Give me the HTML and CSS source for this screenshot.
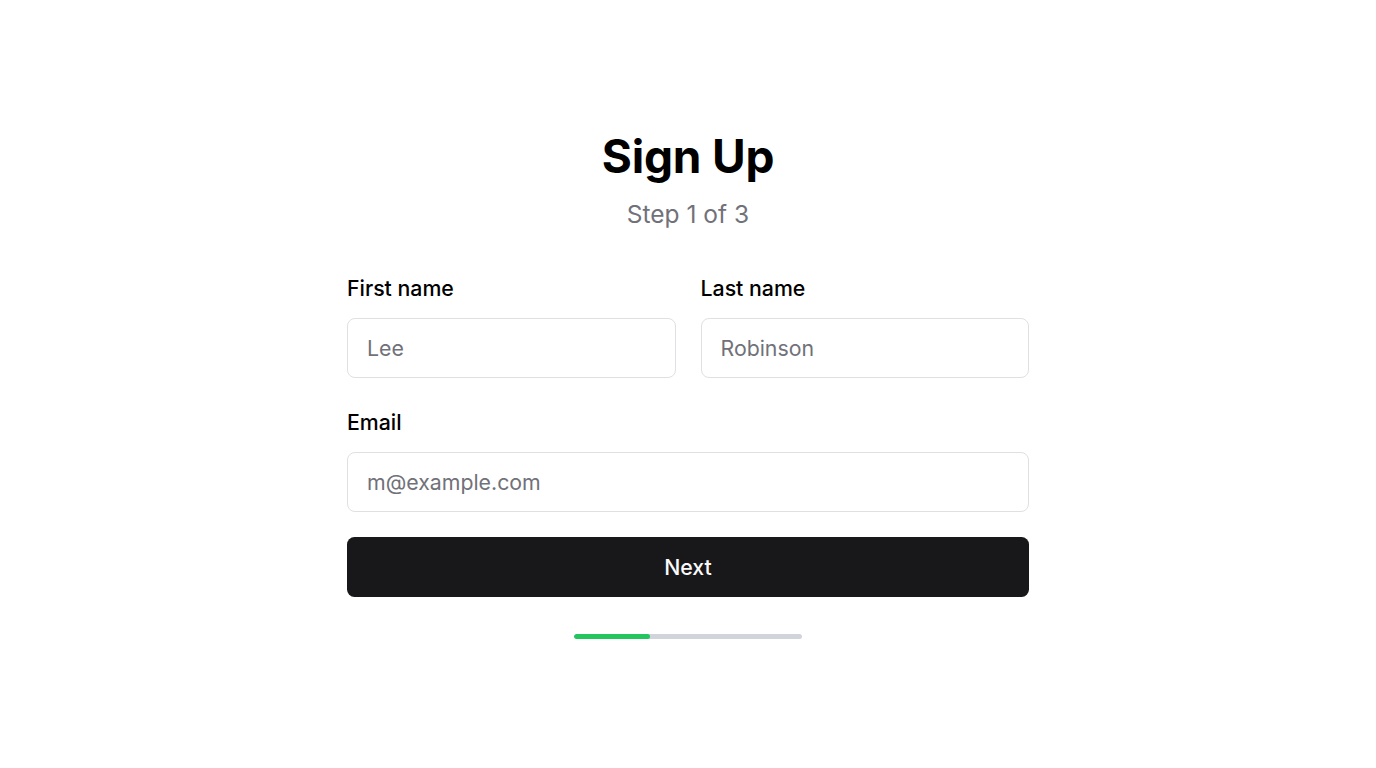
FILE: index.html
```html
<!DOCTYPE html>
<html lang="en">
<head>
<meta charset="utf-8">
<title>Sign Up</title>
<link rel="stylesheet" href="styles.css">
</head>
<body>
<main class="page">
  <div class="card">
    <header class="head">
      <h1 class="title">Sign Up</h1>
      <p class="subtitle">Step 1 of 3</p>
    </header>
    <form class="form">
      <div class="row">
        <div class="field">
          <label class="label" for="first">First name</label>
          <input class="input" id="first" placeholder="Lee">
        </div>
        <div class="field">
          <label class="label" for="last">Last name</label>
          <input class="input" id="last" placeholder="Robinson">
        </div>
      </div>
      <div class="field">
        <label class="label" for="email">Email</label>
        <input class="input" id="email" placeholder="m@example.com">
      </div>
      <button class="button" type="button">Next</button>
    </form>
    <div class="progress"><div class="progress-fill" style="width:33.33%"></div></div>
  </div>
</main>
</body>
</html>
```
FILE: styles.css
```css
* { box-sizing: border-box; }
html, body { margin: 0; padding: 0; background: #ffffff; }
body { font-family: Inter, "Noto Sans", sans-serif; color: #09090b; }
.page {
  min-height: 100vh;
  display: flex;
  align-items: center;
  justify-content: center;
}
.card {
  width: 682px;
  display: flex;
  flex-direction: column;
  align-items: center;
}
.head { text-align: center; margin-bottom: 44px; }
.title {
  margin: 0;
  font-size: 46px;
  font-weight: 700;
  line-height: 52px;
  color: #000;
  letter-spacing: -0.2px;
}
.subtitle {
  margin: 16px 0 0;
  font-size: 24.5px;
  line-height: 32px;
  color: #71717a;
}
.form {
  width: 100%;
  display: flex;
  flex-direction: column;
}
.row {
  display: grid;
  grid-template-columns: 1fr 1fr;
  gap: 25px;
  margin-bottom: 30px;
}
.field { display: flex; flex-direction: column; gap: 16px; }
.label {
  font-size: 21.3px;
  line-height: 28px;
  font-weight: 500;
  color: #000;
}
.input {
  height: 60px;
  width: 100%;
  border: 1.25px solid #e0e0e3;
  border-radius: 8px;
  padding: 0 19px;
  font-family: inherit;
  font-size: 21.3px;
  color: #09090b;
  background: #fff;
  outline: none;
}
.input::placeholder { color: #71717a; }
.button {
  margin-top: 25px;
  height: 60px;
  width: 100%;
  border: none;
  border-radius: 7.5px;
  background: #18181b;
  color: #fafafa;
  font-family: inherit;
  font-size: 21.3px;
  font-weight: 500;
  cursor: pointer;
}
.progress {
  margin-top: 37px;
  width: 228px;
  height: 5px;
  border-radius: 3px;
  background: #d1d5db;
  overflow: hidden;
}
.progress-fill { height: 100%; background: #22c55e; border-radius: 3px; }
```
